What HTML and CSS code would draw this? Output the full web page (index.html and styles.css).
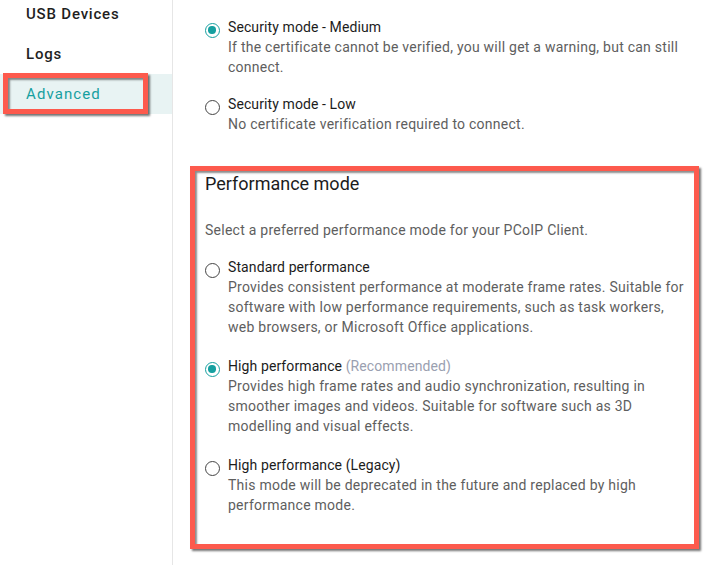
FILE: index.html
```html
<!DOCTYPE html>
<html>
<head>
<meta charset="utf-8">
<link rel="stylesheet" href="styles.css">
</head>
<body>
<div class="page">
  <aside class="sidebar">
    <nav class="nav">
      <div class="nav-item">USB Devices</div>
      <div class="nav-item">Logs</div>
      <div class="nav-item active">Advanced<span class="callout callout-nav"></span></div>
    </nav>
  </aside>
  <main class="main">
    <section class="security">
      <div class="option">
        <span class="radio checked"></span>
        <div class="option-text">
          <div class="label">Security mode - Medium</div>
          <div class="desc">If the certificate cannot be verified, you will get a warning, but can still connect.</div>
        </div>
      </div>
      <div class="option">
        <span class="radio"></span>
        <div class="option-text">
          <div class="label">Security mode - Low</div>
          <div class="desc">No certificate verification required to connect.</div>
        </div>
      </div>
    </section>
    <section class="perf">
      <h2 class="perf-title">Performance mode</h2>
      <p class="perf-intro">Select a preferred performance mode for your PCoIP Client.</p>
      <div class="option">
        <span class="radio"></span>
        <div class="option-text">
          <div class="label">Standard performance</div>
          <div class="desc">Provides consistent performance at moderate frame rates. Suitable for software with low performance requirements, such as task workers, web browsers, or Microsoft Office applications.</div>
        </div>
      </div>
      <div class="option">
        <span class="radio checked"></span>
        <div class="option-text">
          <div class="label">High performance <span class="hint">(Recommended)</span></div>
          <div class="desc">Provides high frame rates and audio synchronization, resulting in smoother images and videos. Suitable for software such as 3D modelling and visual effects.</div>
        </div>
      </div>
      <div class="option">
        <span class="radio"></span>
        <div class="option-text">
          <div class="label">High performance (Legacy)</div>
          <div class="desc">This mode will be deprecated in the future and replaced by high performance mode.</div>
        </div>
      </div>
    </section>
  </main>
</div>
</body>
</html>
```

FILE: styles.css
```css
* { box-sizing: border-box; }
html, body {
  margin: 0;
  padding: 0;
  background: #ffffff;
  font-family: Roboto, "Liberation Sans", sans-serif;
  overflow: hidden;
}
.page {
  display: flex;
  width: 721px;
  height: 565px;
}
.sidebar {
  width: 173px;
  flex: none;
  border-right: 1px solid #e6e6e6;
}
.nav {
  margin-top: -6px;
  display: flex;
  flex-direction: column;
}
.nav-item {
  position: relative;
  height: 40px;
  display: flex;
  align-items: center;
  padding-left: 26px;
  font-size: 15px;
  font-weight: 500;
  letter-spacing: 0.8px;
  color: #1f1f1f;
}
.nav-item.active {
  background: #e8f3f3;
  color: #16a0a0;
  font-weight: 400;
  letter-spacing: 1.1px;
}
.callout {
  position: absolute;
  border: 5px solid #fd5a4d;
  box-shadow: 2px 2px 2px rgba(0,0,0,0.55), inset 2px 2px 2px rgba(0,0,0,0.45);
  pointer-events: none;
}
.callout-nav {
  left: 3px;
  top: -1px;
  width: 145px;
  height: 41px;
}
.main {
  flex: 1;
  padding-left: 32px;
}
.security {
  padding-top: 17px;
  display: flex;
  flex-direction: column;
  gap: 17px;
  width: 500px;
}
.option {
  display: flex;
  align-items: flex-start;
}
.radio {
  flex: none;
  width: 15px;
  height: 15px;
  margin-top: 6px;
  margin-right: 8px;
  border: 1.6px solid #444;
  border-radius: 50%;
  position: relative;
}
.radio.checked {
  border-color: #16a0a0;
}
.radio.checked::after {
  content: "";
  position: absolute;
  left: 2.2px;
  top: 2.2px;
  width: 7.4px;
  height: 7.4px;
  border-radius: 50%;
  background: #16a0a0;
}
.label {
  font-size: 14px;
  line-height: 20px;
  letter-spacing: 0.1px;
  color: #1c1c1c;
}
.hint {
  color: #9aa0b0;
}
.desc {
  font-size: 14px;
  line-height: 20px;
  letter-spacing: 0.25px;
  color: #5e5e5e;
}
.perf {
  margin-top: 32px;
  margin-left: -15px;
  width: 509px;
  height: 383px;
  border: 5px solid #fd5a4d;
  box-shadow: 2px 2px 2px rgba(0,0,0,0.55), inset 2px 2px 2px rgba(0,0,0,0.45);
  padding: 1px 0 0 10px;
  display: flex;
  flex-direction: column;
}
.perf-title {
  margin: 0;
  font-size: 18px;
  font-weight: 400;
  line-height: 24px;
  color: #1c1c1c;
}
.perf-intro {
  margin: 24px 0 17px;
  font-size: 14px;
  line-height: 20px;
  letter-spacing: 0.25px;
  color: #5e5e5e;
}
.perf .option + .option {
  margin-top: 19px;
}
```
